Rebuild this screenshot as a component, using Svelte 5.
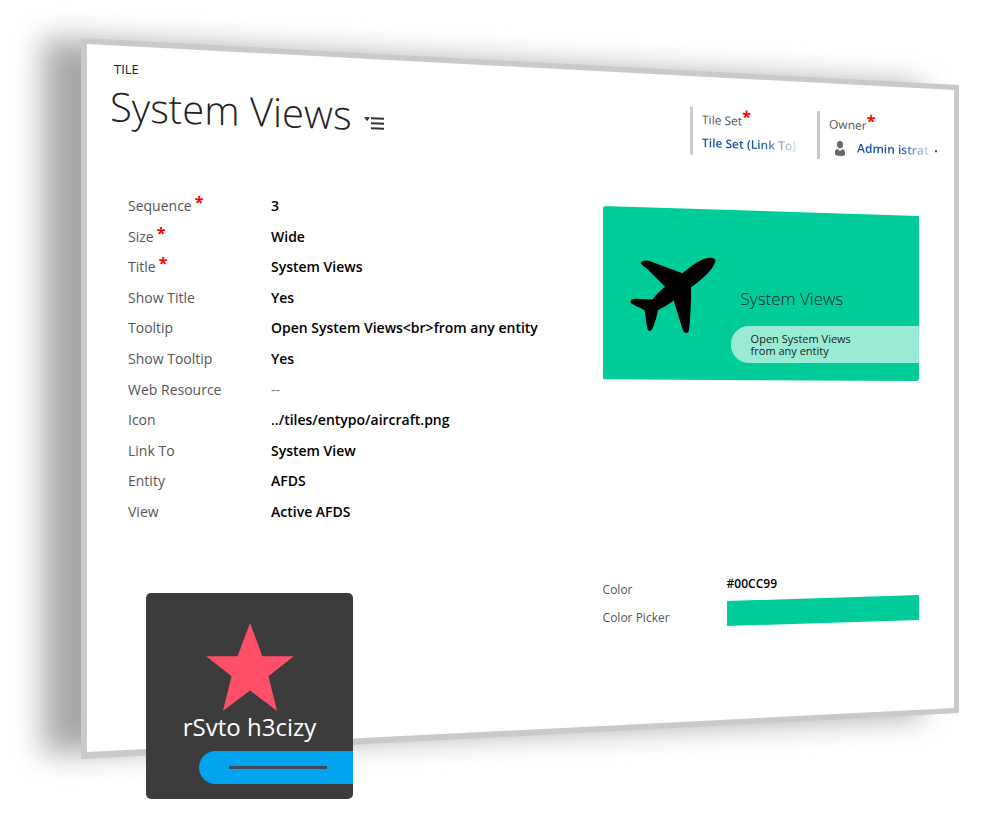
<script>
  let color = '#00cc99';

  const fields = [
    { label: 'Sequence', value: '3', required: true },
    { label: 'Size', value: 'Wide', required: true },
    { label: 'Title', value: 'System Views', required: true },
    { label: 'Show Title', value: 'Yes' },
    { label: 'Tooltip', value: 'Open System Views<br>from any entity' },
    { label: 'Show Tooltip', value: 'Yes' },
    { label: 'Web Resource', value: '' },
    { label: 'Icon', value: '../tiles/entypo/aircraft.png' },
    { label: 'Link To', value: 'System View' },
    { label: 'Entity', value: 'AFDS' },
    { label: 'View', value: 'Active AFDS' }
  ];
</script>

<div class="stage">
  <!-- tilted sheet with its shadow -->
  <svg class="sheet" viewBox="0 0 1000 815" preserveAspectRatio="none" aria-hidden="true">
    <defs>
      <filter id="soft" x="-10%" y="-10%" width="120%" height="120%">
        <feGaussianBlur stdDeviation="15" />
      </filter>
    </defs>
    <polygon class="shadow" points="43,38 922,86 922,716 43,754" filter="url(#soft)" />
    <polygon class="edge" points="81,38 959,85 959,713 81,759" />
    <polygon class="paper" points="87,44 954,90 954,708 87,752" />
  </svg>

  <header>
    <div>
      <p class="kind">TILE</p>
      <div class="heading">
        <h1>System Views</h1>
        <button class="menu" type="button" aria-label="Switch form">
          <svg viewBox="0 0 20 14" width="20" height="14">
            <path d="M0 1h6l-3 4z" />
            <path d="M7 1h13v2H7zM7 6h13v2H7zM7 11h13v2H7z" />
          </svg>
        </button>
      </div>
    </div>

    <div class="lookups">
      <div class="lookup">
        <span class="name">Tile Set<b class="star">*</b></span>
        <a class="fade" href="#tileset">Tile Set (Link To)</a>
      </div>
      <div class="lookup">
        <span class="name">Owner<b class="star">*</b></span>
        <span class="owner">
          <svg class="person" viewBox="0 0 30 45" width="10" height="15">
            <ellipse cx="15" cy="11" rx="9" ry="11" />
            <path d="M7 24l8 7 8-7c5 2 7 6 7 12v4c0 3-4 5-15 5S0 43 0 40v-4c0-6 2-10 7-12z" />
          </svg>
          <a class="fade" href="#owner">Admin istrat</a>
          <i class="dot"></i>
        </span>
      </div>
    </div>
  </header>

  <main>
    <div>
      <dl class="fields">
        {#each fields as f}
          <dt>{f.label}{#if f.required}<b class="star">*</b>{/if}</dt>
          <dd class:empty={!f.value}>{f.value || '--'}</dd>
        {/each}
      </dl>

      <div class="dark-tile">
        <svg class="big-star" viewBox="256 160 262 263" width="88" height="88">
          <polygon points="387,160 424,259 518,259 442,319 468,423 387,362 306,423 332,319 256,259 350,259" />
        </svg>
        <span class="dark-title">rSvto h3cizy</span>
        <div class="bar"><i></i></div>
      </div>
    </div>

    <div>
      <div class="preview" style:background={color}>
        <svg class="plane" viewBox="117 202 258 230" width="86" height="77">
          <path d="M372 209C368 202 350 203 335 209C315 217 295 234 274 250L177 214C165 210 150 212 150 220C152 226 160 230 165 234L222 291C208 303 195 315 184 329L133 327C120 327 116 334 120 340C128 346 150 354 161 362C164 380 165 400 170 418C173 426 181 424 184 417C192 398 198 378 201 361C217 353 233 344 248 332L275 420C279 432 292 434 294 420C297 400 301 340 300 292C325 274 350 254 365 232C371 222 375 214 372 209Z" />
        </svg>
        <div class="caption">
          <span class="preview-title">System Views</span>
          <p class="tip">Open System Views<br />from any entity</p>
        </div>
      </div>

      <div class="colors">
        <div class="color-names">
          <span>Color</span>
          <label for="picker">Color Picker</label>
        </div>
        <div class="color-values">
          <strong>{color.toUpperCase()}</strong>
          <input id="picker" type="color" bind:value={color} />
        </div>
      </div>
    </div>
  </main>
</div>

<style>
  :global(body) {
    margin: 0;
    background: #fff;
  }

  .stage {
    position: relative;
    box-sizing: border-box;
    min-height: 100vh;
    padding: 60px 81px 16px 110px;
    overflow: hidden;
    font: 14px/18px "Open Sans", "Noto Sans", sans-serif;
    color: #555;
  }

  .sheet {
    position: absolute;
    inset: 0;
    width: 100%;
    height: 100%;
    z-index: -1;
  }
  .shadow { fill: #a8a8a8; }
  .edge { fill: #cacaca; }
  .paper { fill: #fff; }

  p, h1, dl, dd {
    margin: 0;
  }

  /* header */
  header {
    display: flex;
    justify-content: space-between;
    height: 131px;
  }
  .kind {
    padding-left: 4px;
    font-size: 13px;
    color: #222;
  }
  .heading {
    display: flex;
    align-items: center;
    gap: 12px;
    padding-top: 3px;
    transform: skewY(2deg);
  }
  h1 {
    font-size: 40px;
    line-height: 60px;
    font-weight: 300;
    color: #222;
  }
  .menu {
    display: flex;
    margin-top: 16px;
    padding: 0;
    border: 0;
    background: none;
    fill: #333;
  }

  .lookups {
    display: grid;
    grid-template-columns: 127px 120px;
    margin-right: -18px;
    padding-top: 51px;
    align-items: start;
    font-size: 12px;
    transform: skewY(2deg);
  }
  .lookup {
    display: flex;
    flex-direction: column;
    gap: 5px;
    height: 44px;
    padding: 4px 0 0 9px;
    border-left: 3px solid #cacaca;
  }
  .star {
    color: #f00;
    font-size: 16px;
    line-height: 1px;
    vertical-align: 3px;
  }
  .fields .star {
    margin-left: 3px;
  }
  a {
    color: #1d55a5;
    font-weight: 600;
    text-decoration: none;
    white-space: nowrap;
  }
  .fade {
    align-self: flex-start;
    mask-image: linear-gradient(to right, #000 60%, rgba(0, 0, 0, 0.2));
  }
  .owner {
    display: flex;
    align-items: center;
    padding-left: 6px;
  }
  .person {
    flex: none;
    margin-right: 12px;
    fill: #666;
  }
  .dot {
    width: 2px;
    height: 2px;
    margin-left: 6px;
    background: #1d55a5;
  }

  /* form body */
  main {
    display: grid;
    grid-template-columns: 3fr 2fr;
    padding-left: 18px;
  }
  .fields {
    display: grid;
    grid-template-columns: 143px 1fr;
    grid-auto-rows: 1fr;
    align-items: center;
    min-height: 336px;
  }
  dd {
    font-weight: 600;
    color: #000;
  }
  .empty {
    font-weight: 400;
    color: #777;
  }

  .dark-tile {
    display: flex;
    flex-direction: column;
    align-items: center;
    box-sizing: border-box;
    width: 207px;
    margin: 66px 0 0 18px;
    padding: 30px 0 15px;
    border-radius: 5px;
    background: #3c3c3c;
  }
  .big-star {
    fill: #ff4f69;
  }
  .dark-title {
    font-size: 24px;
    line-height: 32px;
    color: #fff;
  }
  .bar {
    display: flex;
    align-items: center;
    align-self: flex-end;
    box-sizing: border-box;
    width: 154px;
    height: 33px;
    margin-top: 8px;
    padding: 0 26px 0 30px;
    border-radius: 17px 0 0 17px;
    background: #00a3ee;
  }
  .bar i {
    flex: 1;
    height: 3px;
    background: #3c4c55;
  }

  .preview {
    display: flex;
    height: 175px;
    margin-top: 15px;
    border-radius: 3px;
    clip-path: polygon(0 0, 100% 10px, 100% 100%, 0 99%);
  }
  .plane {
    flex: none;
    margin: 51px 15px 0 27px;
  }
  .caption {
    flex: 1;
    padding-top: 81px;
  }
  .preview-title {
    display: block;
    padding-left: 10px;
    font-size: 17px;
    line-height: 24px;
    font-weight: 300;
    color: #123;
  }
  .tip {
    margin-top: 15px;
    padding: 7px 0 6px 20px;
    border-radius: 18px 0 0 18px;
    background: rgba(255, 255, 255, 0.6);
    font-size: 11px;
    line-height: 12px;
    color: #222;
  }

  .colors {
    display: grid;
    grid-template-columns: 124px 1fr;
    margin-top: 194px;
    font-size: 12px;
  }
  .color-names,
  .color-values {
    display: flex;
    flex-direction: column;
  }
  .color-names {
    gap: 10px;
    padding-top: 6px;
  }
  .color-values {
    gap: 2px;
  }
  .colors strong {
    font-weight: 600;
    color: #000;
  }
  .colors input {
    width: 100%;
    height: 31px;
    padding: 0;
    border: 0;
    background: none;
    clip-path: polygon(0 6px, 100% 0, 100% 25px, 0 100%);
  }
  .colors input::-webkit-color-swatch-wrapper {
    padding: 0;
  }
  .colors input::-webkit-color-swatch {
    border: 0;
  }
</style>
